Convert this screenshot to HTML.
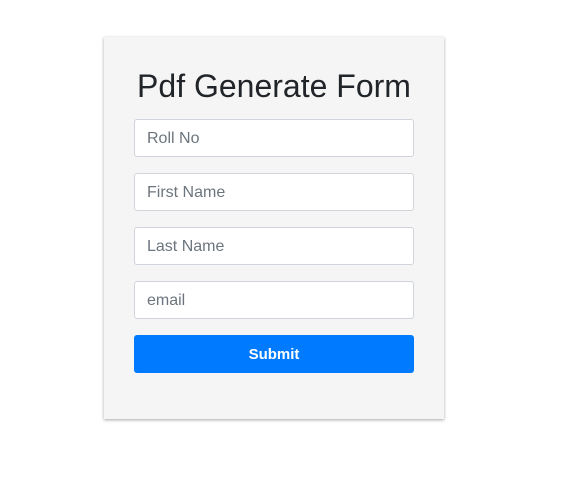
<!DOCTYPE html>
<html><head><style>
*{box-sizing:border-box;margin:0;padding:0}
body{width:565px;height:494px;background:#fff;font-family:"Liberation Sans",sans-serif;position:relative}
.card{position:absolute;left:104px;top:37px;width:340px;height:382px;background:#f5f5f5;box-shadow:0 1px 3px rgba(0,0,0,.35)}
h1{position:absolute;left:0;width:100%;top:31px;text-align:center;font-weight:400;font-size:32px;color:#212529;line-height:36px}
.in{position:absolute;left:30px;width:280px;height:38px;background:#fff;border:1px solid #ced4da;border-radius:3px;padding-left:12px;padding-top:1px;font-size:16px;color:#6c757d;line-height:36px}
.btn{position:absolute;left:30px;top:298px;width:280px;height:38px;background:#007bff;border-radius:3px;color:#fff;font-weight:700;font-size:15px;text-align:center;line-height:39px}
</style></head><body>
<div class="card">
<h1>Pdf Generate Form</h1>
<div class="in" style="top:82px">Roll No</div>
<div class="in" style="top:136px">First Name</div>
<div class="in" style="top:190px">Last Name</div>
<div class="in" style="top:244px">email</div>
<div class="btn">Submit</div>
</div>
</body></html>
